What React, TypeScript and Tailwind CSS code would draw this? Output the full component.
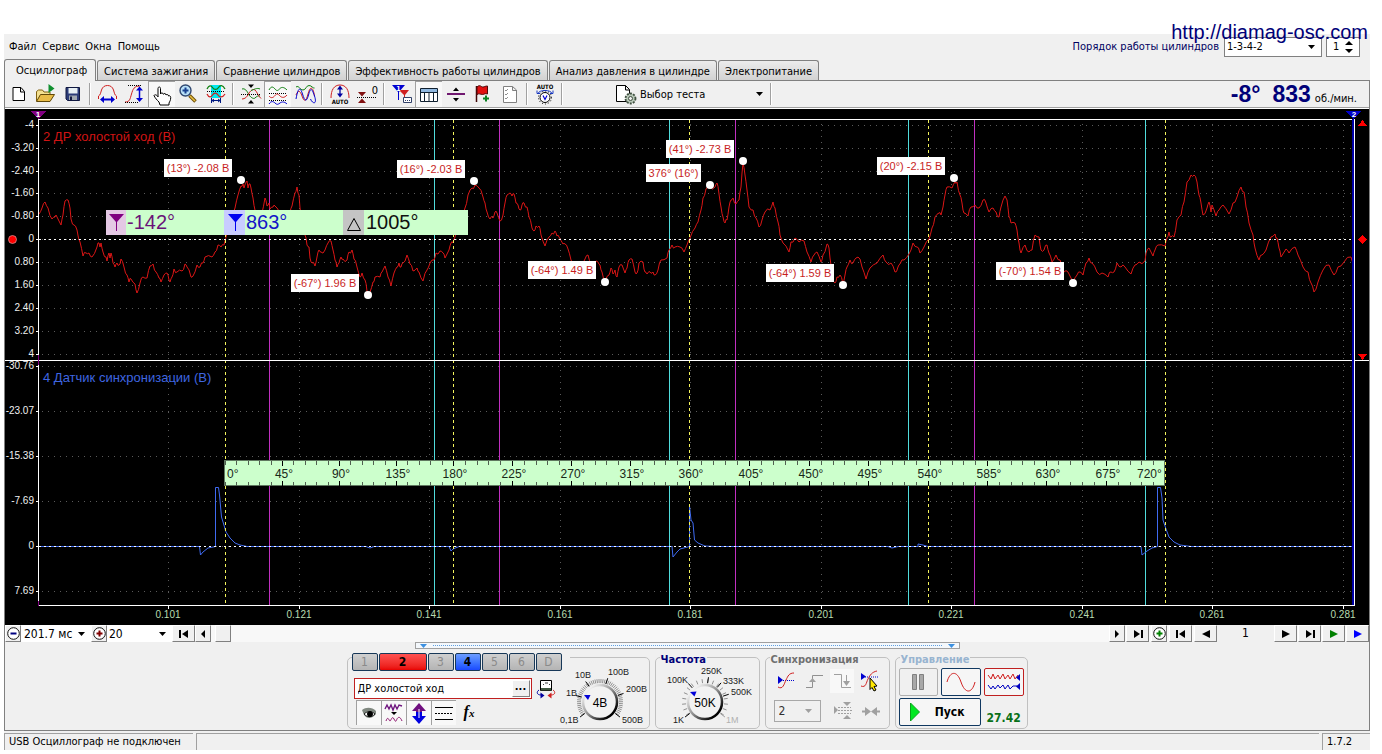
import React, { useState } from 'react';

const TABS = [
  'Осциллограф',
  'Система зажигания',
  'Сравнение цилиндров',
  'Эффективность работы цилиндров',
  'Анализ давления в цилиндре',
  'Электропитание',
];

const MENU = ['Файл', 'Сервис', 'Окна', 'Помощь'];

// channel 2: idle speed pressure sensor, [x, y] in chart units
const RED: number[] = [
  39,214, 42,208, 45,202, 48,208, 52,219, 55,217, 56,215, 61,225, 63,215, 65,201, 68,200, 70,208, 71,219, 74,225, 77,230,
  80,242, 83,256, 86,253, 89,253, 92,257, 97,247, 99,243, 100,247, 101,243, 103,252, 106,257, 107,261, 109,253, 110,258,
  111,253, 113,263, 115,267, 117,263, 119,265, 121,259, 124,267, 127,275, 129,282, 131,279, 135,284, 137,293, 140,283,
  143,277, 147,278, 150,266, 153,264, 156,272, 159,278, 161,282, 164,275, 167,273, 169,280, 170,282, 172,277, 174,269,
  177,272, 182,271, 185,264, 187,267, 191,277, 193,276, 197,265, 200,267, 203,263, 205,257, 212,257, 215,252, 218,245,
  221,247, 224,245, 226,237, 231,222, 235,208, 238,195, 241,186, 243,184, 244,188, 247,181, 248,188, 249,184, 251,188,
  253,198, 255,210, 258,222, 262,213, 265,198, 267,206, 269,203, 270,209, 273,207, 275,206, 277,208, 284,220, 290,212,
  292,206, 295,193, 297,187, 299,195, 300,208, 303,223, 305,235, 307,245, 309,247, 310,258, 312,263, 315,266, 317,257,
  319,250, 321,252, 325,250, 328,243, 331,241, 333,250, 335,260, 337,267, 339,263, 341,257, 343,259, 347,260, 349,252,
  352,250, 354,259, 357,267, 360,277, 362,273, 365,280, 367,291, 368,295, 370,292, 373,282, 375,277, 380,277, 382,272,
  385,266, 388,277, 391,286, 394,273, 397,267, 399,263, 401,267, 403,263, 407,255, 410,264, 413,271, 417,268, 419,272,
  423,281, 427,270, 430,263, 434,260, 436,253, 440,251, 443,253, 445,258, 449,250, 451,243, 453,243, 455,237, 460,222,
  465,208, 468,195, 472,188, 475,185, 479,188, 483,197, 485,203, 487,212, 490,219, 493,218, 495,212, 497,213, 500,221,
  503,215, 505,203, 507,195, 510,193, 512,196, 514,194, 516,203, 518,205, 520,210, 522,205, 524,203, 527,207, 529,217,
  532,228, 534,231, 536,226, 539,226, 541,235, 545,246, 549,237, 552,233, 555,231, 557,236, 559,237, 563,244, 565,244,
  568,249, 571,260, 574,267, 580,265, 585,259, 588,255, 591,262, 594,264, 598,262, 600,265, 602,272, 605,282, 609,275,
  611,268, 613,274, 615,270, 617,277, 619,267, 622,265, 625,273, 627,268, 629,260, 632,259, 635,272, 637,273, 639,263,
  643,262, 645,272, 647,274, 651,273, 653,272, 655,275, 658,270, 661,260, 667,258, 669,250, 672,245, 675,247, 680,247,
  684,252, 687,245, 690,238, 695,228, 698,222, 701,210, 703,198, 706,189, 710,187, 715,187, 717,183, 719,194, 721,207,
  723,217, 725,223, 727,220, 729,207, 731,200, 733,198, 736,204, 739,200, 741,187, 742,173, 743,163, 745,175, 747,190,
  749,207, 753,210, 756,218, 759,227, 762,220, 765,212, 770,210, 773,202, 775,208, 778,222, 780,235, 783,243, 789,252,
  791,242, 795,238, 799,242, 804,241, 807,252, 811,262, 814,255, 817,252, 821,262, 823,255, 827,244, 829,248, 830,258,
  831,265, 833,280, 835,283, 837,277, 840,275, 843,284, 845,275, 847,267, 850,260, 853,263, 856,258, 860,259, 862,267,
  866,279, 870,268, 877,263, 883,255, 886,262, 891,263, 895,272, 898,267, 900,264, 904,260, 909,254, 913,243, 917,247,
  920,253, 924,247, 929,239, 932,228, 935,217, 939,213, 941,215, 943,207, 945,195, 947,187, 952,188, 955,182, 957,182,
  960,195, 962,203, 964,213, 968,216, 971,207, 975,205, 979,208, 983,200, 986,203, 989,212, 993,208, 996,212, 999,217,
  1001,207, 1005,196, 1007,200, 1009,217, 1011,223, 1015,223, 1017,230, 1019,243, 1021,253, 1025,245, 1029,252,
  1032,250, 1035,235, 1039,237, 1041,250, 1044,250, 1047,245, 1049,253, 1052,262, 1056,255, 1060,260, 1064,272,
  1068,272, 1073,282, 1077,275, 1080,272, 1083,275, 1086,263, 1089,258, 1092,263, 1097,272, 1102,273, 1108,277,
  1111,272, 1114,272, 1117,263, 1121,267, 1125,267, 1131,274, 1135,265, 1139,262, 1145,261, 1146,253, 1149,248,
  1153,256, 1155,250, 1158,245, 1165,246, 1167,238, 1169,232, 1171,237, 1174,237, 1177,220, 1181,215, 1184,202,
  1187,182, 1191,175, 1194,175, 1197,182, 1199,195, 1201,203, 1203,215, 1207,208, 1209,202, 1211,212, 1212,205,
  1216,216, 1219,210, 1223,205, 1229,214, 1233,203, 1237,197, 1241,187, 1244,192, 1246,207, 1249,223, 1253,235,
  1255,248, 1259,260, 1262,255, 1266,250, 1271,237, 1275,234, 1277,238, 1279,248, 1281,257, 1286,249, 1289,253,
  1295,247, 1298,255, 1303,267, 1308,272, 1311,283, 1314,292, 1318,282, 1323,270, 1329,265, 1334,275, 1338,267,
  1344,262, 1351,257, 1353,263,
];

// channel 4: sync sensor
const BLUE =
  '39,546.5 199.5,546.5 200.5,555 203,552 208,548 215.5,546.5 215.5,487.5 218.5,487.5 219.5,495 221.5,517 223,522 226,532 230,538 235,543 240,545 247,546.5 366,546.5 370,548 374,546.5 449,546.5 451,551 453,549 459,546.5 672,546.5 673,557 677,552 680,549 689.5,546.5 689.5,506 691,520 693,523 694.5,540 698,543 705,546 715,546.5 888,546.5 892,548 898,546.5 918,546.5 918,544 923,545 928,546.5 1141,546.5 1142,555 1147,551 1152,548 1157.5,546.5 1157.5,487.5 1160.5,487.5 1162,498 1163,520 1166,529 1169,537 1174,542 1180,545 1191,546.5 1353,546.5';

// fills the gaps between the samples with a little sensor noise
function noisy(flat: number[]) {
  const out: string[] = [];
  let seed = 7;
  for (let i = 0; i < flat.length; i += 2) {
    const x = flat[i];
    const y = flat[i + 1];
    out.push(`${x},${y}`);
    if (i + 2 < flat.length) {
      seed = (seed * 73 + 41) % 211;
      const nx = flat[i + 2];
      const ny = flat[i + 3];
      if (nx - x > 1) out.push(`${(x + nx) / 2},${(y + ny) / 2 + ((seed % 7) - 3) * 0.7}`);
    }
  }
  return out.join(' ');
}

const RED_POINTS = noisy(RED);

const TOP_AXIS: [string, number][] = [
  ['-4', 125], ['-3.20', 148], ['-2.40', 171], ['-1.60', 193], ['-0.80', 216], ['0', 239],
  ['0.80', 262], ['1.60', 285], ['2.40', 308], ['3.20', 331], ['4', 354],
];
const BOTTOM_AXIS: [string, number][] = [
  ['-30.76', 366], ['-23.07', 411], ['-15.38', 456], ['-7.69', 501], ['0', 546], ['7.69', 591],
];
const TIME_AXIS: [string, number][] = [
  ['0.101', 168], ['0.121', 299], ['0.141', 429], ['0.161', 560], ['0.181', 690],
  ['0.201', 821], ['0.221', 951], ['0.241', 1082], ['0.261', 1212], ['0.281', 1343],
];
const RULER: [string, number][] = [
  ['45°', 282], ['90°', 339], ['135°', 396], ['180°', 453], ['225°', 512], ['270°', 571], ['315°', 630], ['360°', 689],
  ['405°', 749], ['450°', 809], ['495°', 868], ['540°', 928], ['585°', 987], ['630°', 1046], ['675°', 1106],
];
const YELLOW = [225, 453, 689, 928, 1165];
const MAGENTA = [269, 499, 735, 974];
const CYAN = [434, 669, 908, 1145];

const NOTES: { x: number; y: number; w: number; text: string; dot: [number, number] }[] = [
  { x: 164, y: 159, w: 68, text: '(13°) -2.08 В', dot: [241, 180] },
  { x: 397, y: 160, w: 68, text: '(16°) -2.03 В', dot: [474, 181] },
  { x: 291, y: 274, w: 68, text: '(-67°) 1.96 В', dot: [368, 295] },
  { x: 528, y: 261, w: 68, text: '(-64°) 1.49 В', dot: [605, 282] },
  { x: 646, y: 164, w: 55, text: '376° (16°)', dot: [710, 185] },
  { x: 666, y: 140, w: 68, text: '(41°) -2.73 В', dot: [743, 161] },
  { x: 766, y: 264, w: 68, text: '(-64°) 1.59 В', dot: [843, 285] },
  { x: 877, y: 157, w: 68, text: '(20°) -2.15 В', dot: [954, 178] },
  { x: 996, y: 262, w: 68, text: '(-70°) 1.54 В', dot: [1073, 283] },
];

function Chart() {
  const stops = [225, ...RULER.map((r) => r[1]), 1165];
  return (
    <svg
      viewBox="5 109 1364 516"
      className="block w-full h-auto bg-black font-['Liberation_Sans',Arial,sans-serif]"
      shapeRendering="crispEdges"
    >
      {/* grid */}
      <g stroke="#5a5a5a" strokeDasharray="1 5">
        {[...TOP_AXIS, ...BOTTOM_AXIS].map(([, y]) => (
          <line key={y} x1="42" x2="1353" y1={y + 0.5} y2={y + 0.5} />
        ))}
        {TIME_AXIS.map(([, x]) => (
          <line key={x} x1={x + 0.5} x2={x + 0.5} y1="124" y2="604" />
        ))}
      </g>

      {/* phase markers */}
      {CYAN.map((x) => (
        <rect key={x} x={x} y="120" width="1" height="485" fill="#50dcdc" />
      ))}
      {MAGENTA.map((x) => (
        <rect key={x} x={x} y="120" width="1" height="485" fill="#c030c0" />
      ))}

      {/* traces */}
      <polyline points={RED_POINTS} fill="none" stroke="#dc1616" shapeRendering="auto" />
      <polyline points={BLUE} fill="none" stroke="#3f6af0" shapeRendering="auto" />
      {YELLOW.map((x) => (
        <line key={x} x1={x + 0.5} x2={x + 0.5} y1="120" y2="605" stroke="#f4f45c" strokeDasharray="3 3" />
      ))}
      <g stroke="#fff" strokeDasharray="2 3">
        <line x1="39" x2="1353" y1="239.5" y2="239.5" />
        <line x1="39" x2="1353" y1="546.5" y2="546.5" />
      </g>

      {/* frame */}
      <g stroke="#fff">
        <line x1="38" x2="1355" y1="119.5" y2="119.5" />
        <line x1="5" x2="1369" y1="360.5" y2="360.5" />
        <line x1="38" x2="1355" y1="605.5" y2="605.5" />
        <line x1="38.5" x2="38.5" y1="119" y2="605" />
        <line x1="1354.5" x2="1354.5" y1="119" y2="605" />
        {[...TOP_AXIS, ...BOTTOM_AXIS].map(([, y]) => (
          <line key={y} x1="36" x2="39" y1={y + 0.5} y2={y + 0.5} />
        ))}
        {TIME_AXIS.map(([, x]) => (
          <line key={x} x1={x + 0.5} x2={x + 0.5} y1="605" y2="609" />
        ))}
      </g>
      <rect x="1352" y="119" width="2" height="486" fill="#0000a8" />
      <rect x="38" y="601" width="1" height="5" fill="#800080" />
      <rect x="38" y="355" width="1" height="10" fill="#800080" />

      {/* cursor flags */}
      <polygon points="31,111 46,111 39,119 38,119" fill="#800080" />
      <polygon points="1346,111 1361,111 1354,119 1353,119" fill="#0000c8" />
      <g fontSize="8" fontWeight="bold" fill="#fff" textAnchor="middle">
        <text x="38" y="117">1</text>
        <text x="1354" y="117">2</text>
      </g>
      <g fill="#f00">
        <polygon points="1362.5,120 1367,126 1358,126" />
        <polygon points="1362.5,235 1367,239.5 1362.5,244 1358,239.5" />
        <polygon points="1358,354 1367,354 1362.5,360" />
        <circle cx="12.5" cy="239.5" r="4" shapeRendering="auto" stroke="#e0a0a0" strokeWidth="0.7" />
      </g>

      {/* axis labels */}
      <g fontSize="10" fill="#f0f0f0" textAnchor="end">
        {[...TOP_AXIS, ...BOTTOM_AXIS].map(([t, y]) => (
          <text key={y} x="34" y={y + 3}>{t}</text>
        ))}
      </g>
      <g fontSize="10" fill="#b8dcb0" textAnchor="middle">
        {TIME_AXIS.map(([t, x]) => (
          <text key={x} x={x} y="618">{t}</text>
        ))}
      </g>
      <text x="43" y="141" fontSize="13" fill="#d01414">2 ДР холостой ход (В)</text>
      <text x="43" y="382" fontSize="13" fill="#3f66e0">4 Датчик синхронизации (В)</text>

      {/* peak notes */}
      {NOTES.map((n) => (
        <g key={n.text}>
          <rect x={n.x} y={n.y} width={n.w} height="18" fill="#fff" />
          <text x={n.x + n.w / 2} y={n.y + 13} fontSize="11" fill="#c81e1e" textAnchor="middle">{n.text}</text>
          <circle cx={n.dot[0]} cy={n.dot[1]} r="4" fill="#fff" shapeRendering="auto" />
        </g>
      ))}

      {/* cursor readout */}
      <rect x="106" y="210" width="362" height="25" fill="#ccffcc" />
      <rect x="106" y="210" width="20" height="25" fill="#e4c8e4" />
      <rect x="224" y="210" width="21" height="25" fill="#c8ccff" />
      <rect x="343" y="210" width="21" height="25" fill="#c4c4c4" />
      <g shapeRendering="auto">
        <path d="M109 214h15l-7 8v9h-1v-9z" fill="#800080" />
        <path d="M228 214h15l-7 8v9h-1v-9z" fill="#0000f0" />
        <path d="M354 218.500l6.500 12h-13z" fill="none" stroke="#000" />
      </g>
      <g fontSize="20">
        <text x="127" y="229" fill="#6a1478">-142°</text>
        <text x="246" y="229" fill="#1414c8">863°</text>
        <text x="366" y="229" fill="#101010">1005°</text>
      </g>

      {/* degree ruler */}
      <rect x="224.500" y="460.500" width="940" height="25" fill="#ccffcc" stroke="#607860" />
      {stops.slice(0, -1).map((a, i) =>
        [0, 1, 2, 3, 4].map((k) => {
          const x = Math.round(a + ((stops[i + 1] - a) * k) / 5) + 0.5;
          const major = k === 0 && i > 0;
          return (
            <path
              key={`${i}-${k}`}
              d={major ? `M${x} 461v5M${x} 481v5` : `M${x} 461v4M${x} 482v4`}
              stroke={major ? '#000' : '#506050'}
            />
          );
        }),
      )}
      <g fontSize="12" fill="#182818">
        <text x="227" y="478">0°</text>
        {RULER.map(([t, x]) => (
          <text key={t} x={x + 2} y="478" textAnchor="middle">{t}</text>
        ))}
        <text x="1137" y="478">720°</text>
      </g>
    </svg>
  );
}

/* ---------- toolbar ---------- */

const GREEN = '#108010';
const CRIMSON = '#d02020';
const NAVY = '#0000d0';

function Icon({ children }: { children: React.ReactNode }) {
  return (
    <svg viewBox="0 0 24 24" className="w-6 h-6 shrink-0" fill="none" stroke="#000">
      {children}
    </svg>
  );
}

type Tool = { name: string; pressed?: boolean; art: React.ReactNode } | null;

const TOOLS: Tool[] = [
  {
    name: 'Новый',
    art: <path d="M6 5.500h8l3.500 4v9H6zM13.500 5.500v4.500h4" fill="#fff" />,
  },
  {
    name: 'Открыть',
    art: (
      <>
        <path d="M2.500 19V9.500l2-1.500h4l1.500 2h6v3" fill="#f4e090" stroke="#806010" />
        <path d="M2.500 19.500l4-7h14l-4.500 7z" fill="#e8bc48" stroke="#604808" />
        <path d="M14.500 2v9l6-4.500z" fill="#109030" stroke="none" />
      </>
    ),
  },
  {
    name: 'Сохранить',
    art: (
      <>
        <path d="M5 5.500h13.500v13H6.500L5 17z" fill="#2c3c78" stroke="#101840" />
        <path d="M7.500 6h9v5.500h-9z" fill="#e8f0f4" stroke="none" />
        <path d="M8 13.500h8V18H8z" fill="#a0a8b0" stroke="none" />
        <path d="M9 14.500h2V18H9z" fill="#101840" stroke="none" />
      </>
    ),
  },
  null,
  {
    name: 'Ширина',
    art: (
      <>
        <path d="M2.500 17v-3c2-1 2-3 3-6s3-4.500 6-4.500 5 1.500 6 4.500 1 5 3 6v3" stroke={CRIMSON} />
        <path d="M6 17.500h11" stroke={NAVY} strokeWidth="2" />
        <path d="M4 17.500l4-3.500v7zM19 17.500l-4-3.500v7z" fill={NAVY} stroke="none" />
      </>
    ),
  },
  {
    name: 'Высота',
    art: (
      <>
        <path d="M2 20c5 0 5-3 6.500-8S11 4 17 4" stroke={CRIMSON} />
        <path d="M5 3.500h14M2 20.500h13" strokeDasharray="1 1" />
        <path d="M16.500 7v11" stroke={NAVY} strokeWidth="1.500" />
        <path d="M16.500 4.500l3.500 4h-7zM16.500 20l3.500-4h-7z" fill={NAVY} stroke="none" />
      </>
    ),
  },
  {
    name: 'Рука',
    pressed: true,
    art: (
      <path
        d="M10 22l-1-3c-2-2-4-4-5-6.500 1-1.500 3-.5 4 1.500V5.500c0-2 2.500-2 2.500 0V11c.5-1.500 2.500-1.500 2.800.3.700-1.300 2.700-1 2.700.7.800-1 2.500-.5 2.500 1 1-.7 2.200 0 2.200 1.500 0 3-1 4-1.700 5.500v2z"
        fill="#fff"
      />
    ),
  },
  {
    name: 'Лупа',
    art: (
      <>
        <path d="M12.500 13.500l6 6" stroke="#705008" strokeWidth="3.500" />
        <path d="M13 14l5 5" stroke="#e8c040" strokeWidth="1.500" />
        <circle cx="8.500" cy="8.500" r="5.500" fill="#b8e0f8" stroke="#304870" strokeWidth="1.400" />
        <path d="M8.500 5.500v6M5.500 8.500h6" stroke="#184090" strokeWidth="2" />
      </>
    ),
  },
  {
    name: 'Область',
    art: (
      <>
        <path d="M7 3h10v13H7z" fill="#00e8f0" stroke="none" />
        <path d="M3 7c2-4 4-4 5.500-1.500S13 8 14.500 5.500 18.500 2.500 21 7" stroke={GREEN} strokeWidth="1.300" />
        <path d="M3 9.500h18" strokeDasharray="1 1" />
        <path d="M3 12c2 4 4 3.500 5.500 1s4-2.500 5.500 0 4.500 3 7-1" stroke={CRIMSON} strokeWidth="1.300" />
        <path d="M7.500 16v5M16.500 16v5M8 18.500h8M10 17l-2 1.500 2 1.500M14 17l2 1.500-2 1.500" stroke="#001880" />
      </>
    ),
  },
  null,
  {
    name: 'Совместить',
    art: (
      <>
        <path d="M9 2.500h6l-3 3.500zM9 21.500h6l-3-3.500z" fill="#000" stroke="none" />
        <path d="M3 7c3-1 5 2 6.500 5s5 5.500 6.500 4 3-2.500 5-2" stroke={GREEN} />
        <path d="M3 17c3 0 5-2 6.500-5S14 6.500 16 8s3 6 6 8.500" stroke={CRIMSON} />
        <path d="M12 8.500c3-1 6-3 9-1.500" stroke={GREEN} />
        <path d="M2 12.500h20" strokeDasharray="1 1" />
      </>
    ),
  },
  {
    name: 'Раздельно',
    pressed: true,
    art: (
      <>
        <path d="M3 7c2-4 4-3.500 6-1s3 1.500 5-.5 4.500-1 7 1.500" stroke={GREEN} />
        <path d="M3 10.500h18M3 17.500h18" strokeDasharray="1 1" />
        <path d="M3 13c2 2.500 4 2 6-.5s3-1.500 5 .5 4.500 2 7-1" stroke={CRIMSON} />
        <path d="M3 21c2-3 4-3 6-1s3 1.500 5 0 4.500-1.500 7 1" stroke={NAVY} />
      </>
    ),
  },
  {
    name: 'Вместе',
    art: (
      <>
        <path d="M3 5c3-2 4 3 7 3s3-4.500 6-4.500 3.500 3 5.500 2.500" stroke={GREEN} />
        <path d="M3 13c2-5 4-5 6 1s4 6 6-2 5-8 6.500 2" stroke={CRIMSON} />
        <path d="M3 17C5 6 7 4 9.500 12s4 8 6 1 3-8 6 1-2 8-4 3" stroke={NAVY} />
      </>
    ),
  },
  null,
  {
    name: 'Авто',
    art: (
      <>
        <path d="M3 16c0-8 3-13 9-13s9 5 9 13" stroke={CRIMSON} />
        <path d="M12 5v9" stroke="#0000a0" strokeWidth="1.300" />
        <path d="M12 3.500l3 4H9zM12 15.500l3-4H9z" fill="#0000a0" stroke="none" />
        <text x="12" y="22" fontSize="6" fontWeight="bold" textAnchor="middle" fill="#000" stroke="none">AUTO</text>
      </>
    ),
  },
  {
    name: 'Ноль',
    art: (
      <>
        <text x="20" y="12" fontSize="11" textAnchor="middle" fill="#000" stroke="none">0</text>
        <path d="M3 10h8l-4 4.500zM3 21h8l-4-4.500z" fill="#801010" stroke="none" />
        <path d="M2 15.500h20" strokeDasharray="1 1" />
      </>
    ),
  },
  null,
  {
    name: 'Курсоры',
    art: (
      <>
        <path d="M2 3h13l-6 7v8H8v-8z" fill={NAVY} stroke="none" />
        <path d="M9 8h10l-4 5v6h-1v-6z" fill={CRIMSON} stroke="none" />
        <text x="8.500" y="9" fontSize="7" fontWeight="bold" textAnchor="middle" fill="#fff" stroke="none">1</text>
        <path d="M13.500 15.500h8v5h-8z" fill="#fff" stroke="#304068" />
        <path d="M15 18.500h5" stroke="#304068" strokeDasharray="1 1" />
      </>
    ),
  },
  {
    name: 'Таблица',
    pressed: true,
    art: (
      <>
        <path d="M3.500 5.500h17v13h-17z" fill="#fff" stroke="#102030" />
        <path d="M4 6h16v3H4z" fill="#90b8e0" stroke="none" />
        <path d="M3.500 9.500h17M7.500 9v9.500M12 9v9.500M16.500 9v9.500" stroke="#102030" />
      </>
    ),
  },
  {
    name: 'Уровень',
    art: (
      <>
        <path d="M3 12h18" stroke="#701870" strokeWidth="2" />
        <path d="M9 9h6l-3-3.500zM9 16h6l-3 3.500z" fill="#000" stroke="none" />
      </>
    ),
  },
  {
    name: 'Метка',
    art: (
      <>
        <path d="M5.500 4v16" stroke="#400808" strokeWidth="1.500" />
        <path d="M6 5c3-3 4 0 6 0 1.500 0 2-1 4.500-1v8c-3-1-3 .5-5 .5S8 11 6 12.500z" fill="#e01010" stroke="#500808" />
        <path d="M15 13.500v6M12 16.500h6" stroke="#088020" strokeWidth="2" />
      </>
    ),
  },
  {
    name: 'Отчёт',
    art: (
      <>
        <path d="M5.500 4.500h9l4 3.500v12.500h-13zM14.500 4.500V8.500h4" fill="#fff" stroke="#808080" />
        <path d="M7 8l1 1 2-2M7 12l1 1 2-2M7 16l1 1 2-2" stroke="#909090" />
      </>
    ),
  },
  null,
  {
    name: 'Автонастройка',
    art: (
      <>
        <text x="12" y="7" fontSize="6" fontWeight="bold" textAnchor="middle" fill="#000" stroke="none">AUTO</text>
        <circle cx="12" cy="15.500" r="5" fill="#fff" />
        <circle cx="12" cy="15.500" r="6.500" strokeDasharray="1 2" />
        <path d="M10 13.500l2 4 2-4" stroke={NAVY} strokeWidth="1.200" />
        <path d="M5 11.500c1-4 13-4 14 0M4 8.500v3h3M20 8.500v3h-3" stroke="#1838c0" />
      </>
    ),
  },
  null,
];

function Sep() {
  return (
    <div className="w-2 flex justify-center py-0.5">
      <div className="w-0.5 h-full bg-[#a0a0a0] border-r border-white" />
    </div>
  );
}

function Toolbar() {
  return (
    <div className="flex h-[27px] border-b border-[#a0a0a0]">
      {TOOLS.map((t, i) =>
        t ? (
          <button
            key={i}
            aria-label={t.name}
            className={
              t.pressed
                ? 'w-[27px] flex items-center justify-center bg-[#f8f8f8] border-l border-t border-[#a0a0a0]'
                : 'w-[27px] flex items-center justify-center'
            }
          >
            <Icon>{t.art}</Icon>
          </button>
        ) : (
          <Sep key={i} />
        ),
      )}
      <button className="w-[201px] flex items-center pl-12 pr-1">
        <Icon>
          <path d="M2.500 3.500h9l4 4v12h-13zM11.500 3.500V8h4" fill="#fff" />
          <circle cx="16.500" cy="16.500" r="5" fill="#b8c8b8" stroke="#405040" strokeWidth="1.800" strokeDasharray="2 1.200" />
          <circle cx="16.500" cy="16.500" r="2" fill="#f0f0f0" stroke="#405040" />
        </Icon>
        <span className="grow text-left pl-0.5">Выбор теста</span>
        <Caret />
      </button>
      <Sep />
      <div className="ml-auto flex items-baseline pr-3 font-['Liberation_Sans',Arial,sans-serif] text-[23px] leading-[26px] font-bold text-[#000078]">
        <span className="mr-3">-8°</span>
        <span>833</span>
        <span className="ml-1 text-[11px] font-normal text-black font-['DejaVu_Sans_Condensed','DejaVu_Sans',sans-serif]">об./мин.</span>
      </div>
    </div>
  );
}

function Caret({ className = 'fill-black' }: { className?: string }) {
  return (
    <svg viewBox="0 0 7 4" className={`w-[7px] h-1 shrink-0 ${className}`}>
      <path d="M0 0h7L3.500 4z" />
    </svg>
  );
}

/* ---------- navigation strip ---------- */

const RAISED = 'h-[17px] flex items-center justify-center bg-[#f0f0f0] border border-t-white border-l-white border-b-[#808080] border-r-[#808080]';

function NavButton({ name, wide = true, d, fill = '#000' }: { name: string; wide?: boolean; d: string; fill?: string }) {
  return (
    <button aria-label={name} className={`${RAISED} ${wide ? 'w-[23px]' : 'w-4'}`}>
      <svg viewBox="0 0 12 10" className="w-3 h-2.5 shrink-0">
        <path d={d} fill={fill} />
      </svg>
    </button>
  );
}

function ZoomButton({ name, color, plus }: { name: string; color: string; plus?: boolean }) {
  return (
    <button aria-label={name} className={`${RAISED} w-4`}>
      <svg viewBox="0 0 13 13" className="w-[13px] h-[13px] shrink-0" fill="none">
        <circle cx="6.500" cy="6.500" r="5.800" fill="#fff" stroke="#101010" />
        <path d={plus ? 'M3.500 6.500h6M6.500 3.500v6' : 'M3.500 6.500h6'} stroke={color} strokeWidth="2" />
      </svg>
    </button>
  );
}

const FIRST = 'M1 1h2v8H1zM10 1v8L4 5z';
const LAST = 'M9 1h2v8H9zM2 1v8l6-4z';
const PREV = 'M10 1v8L2 5z';
const NEXT = 'M2 1v8l8-4z';

function NavStrip() {
  return (
    <div className="flex h-[17px] bg-[#f8f8f8]">
      <ZoomButton name="Меньше" color="#000080" />
      <label className="relative flex items-center bg-white w-[70px] border-l border-white">
        <select aria-label="Развёртка" className="appearance-none w-full pl-0.5 bg-transparent outline-none text-[12px] leading-4">
          <option>201.7 мс</option>
        </select>
        <Caret className="absolute right-1.5 pointer-events-none" />
      </label>
      <ZoomButton name="Больше" color="#800000" plus />
      <label className="relative flex items-center bg-white w-[65px]">
        <select aria-label="Масштаб" className="appearance-none w-full pl-0.5 bg-transparent outline-none text-[12px] leading-4">
          <option>20</option>
        </select>
        <Caret className="absolute right-1.5 pointer-events-none" />
      </label>
      <NavButton name="В начало" d={FIRST} />
      <NavButton name="Назад" wide={false} d="M8 1v8L4 5z" />
      <button aria-label="Прокрутка" className={`${RAISED} w-4 ml-1`} />
      <div className="grow" />
      <NavButton name="Вперёд" wide={false} d="M4 1v8l4-4z" />
      <div className="flex gap-0.5 ml-px">
        <NavButton name="В конец" d={LAST} />
        <ZoomButton name="Добавить кадр" color="#008000" plus />
        <NavButton name="Первый кадр" d={FIRST} />
        <NavButton name="Предыдущий кадр" d={PREV} />
      </div>
      <span className="w-[57px] text-center bg-[#f0f0f0] text-[12px] leading-[17px]">1</span>
      <div className="flex gap-px">
        <NavButton name="Следующий кадр" d={NEXT} />
        <NavButton name="Последний кадр" d={LAST} />
        <NavButton name="Воспроизвести" d={NEXT} fill="#008000" />
        <NavButton name="Воспроизвести всё" d={NEXT} fill="#0000ff" />
      </div>
    </div>
  );
}

/* ---------- bottom panels ---------- */

const CHANNELS = ['1', '2', '3', '4', '5', '6', 'D'];

function channelClass(c: string) {
  if (c === '2') return 'w-12 font-bold text-black bg-linear-to-b from-[#ff5050] to-[#e80000]';
  if (c === '4') return 'w-[26px] font-bold text-black bg-linear-to-b from-[#6c9cff] to-[#1c48ff]';
  return 'w-[26px] text-[#8a8a8a] bg-linear-to-b from-[#d0d0d0] to-[#b4b4b4]';
}

const KNOB_FONT = "font-['Liberation_Sans',Arial,sans-serif]";

type Mark = { text: string; x: number; y: number; angle: number; dim?: boolean };

function Dial({ name, value, cx, box, marks, ticks, pointer }: {
  name: string; value: string; cx: number; box: string; marks: Mark[]; ticks: number; pointer: string;
}) {
  const tick = (deg: number, r1: number, r2: number) => {
    const a = (deg * Math.PI) / 180;
    return `M${cx + r1 * Math.sin(a)} ${702 - r1 * Math.cos(a)}L${cx + r2 * Math.sin(a)} ${702 - r2 * Math.cos(a)}`;
  };
  const gradId = `rim${cx}`;
  return (
    <div className="relative">
      <svg viewBox={box} className={`block w-full h-[66px] ${KNOB_FONT}`} fontSize="9">
        <defs>
          <linearGradient id={gradId} x1="0" y1="0" x2="1" y2="1">
            <stop offset="0.15" stopColor="#f0f0f0" />
            <stop offset="0.5" stopColor="#909090" />
            <stop offset="0.85" stopColor="#000" />
          </linearGradient>
        </defs>
        {Array.from({ length: ticks }, (_, i) => (
          <path key={i} d={tick(-125 + (250 * i) / (ticks - 1), 19, 23)} stroke="#909090" />
        ))}
        {marks.map((m) => (
          <g key={m.text}>
            <path d={tick(m.angle, 19, 25)} stroke={m.dim ? '#a0a0a0' : '#000'} />
            <text x={m.x} y={m.y + 3} fill={m.dim ? '#b0b0b0' : '#202020'}>{m.text}</text>
          </g>
        ))}
        <circle cx={cx} cy="702" r="17" fill="#f2f2f2" stroke={`url(#${gradId})`} strokeWidth="2.500" />
        <path d={pointer} fill="#0000d8" />
        <text x={cx} y="707" fontSize="12" textAnchor="middle" fill="#000">{value}</text>
      </svg>
      <input type="range" aria-label={name} className="absolute inset-0 w-full h-full opacity-0" />
    </div>
  );
}

function Group({ title, tone, className, children }: {
  title: string; tone: string; className: string; children: React.ReactNode;
}) {
  return (
    <fieldset className={`h-[76px] border border-[#c0c0c0] rounded-[5px] ${className}`}>
      <legend className={`ml-1 h-2 leading-[13px] px-px text-[11px] font-bold ${tone}`}>{title}</legend>
      {children}
    </fieldset>
  );
}

const TOGGLE = 'w-[25px] h-[25px] flex items-center justify-center bg-[#f8f8f8] border-l border-t border-[#a0a0a0]';

function ChannelPanel() {
  const [name, setName] = useState('ДР холостой ход');
  return (
    <fieldset className="h-[76px] w-[303px] border border-[#c0c0c0] rounded-[5px]">
      <legend className="ml-1 pr-2 h-2">
        <div className="flex gap-px">
          {CHANNELS.map((c) => (
            <button key={c} className={`h-[18px] border border-[#183858] rounded-[2px] text-[12px] leading-4 ${channelClass(c)}`}>
              {c}
            </button>
          ))}
        </div>
      </legend>
      <div className="flex justify-between">
        <div className="pl-1.5 pt-[17px]">
          <div className="flex items-center gap-1">
            <div className="flex w-[178px] h-[21px] border border-[#c02020] bg-white p-px">
              <input
                aria-label="Название канала"
                value={name}
                onChange={(e) => setName(e.target.value)}
                className="grow min-w-0 pl-0.5 outline-none bg-transparent"
              />
              <button className={`${RAISED} w-[18px] font-bold leading-3 pb-1`}>...</button>
            </div>
            <svg viewBox="0 0 20 20" className="w-5 h-5" fill="none">
              <path d="M4.500 1.500h11v10h-11z" fill="#fff" stroke="#000" />
              <path d="M5 9h10v2.500H5z" fill="#405840" />
              <path d="M7 6l1-1M9 4h3M13 5l1 1" stroke="#404040" />
              <path d="M3 11c-3 2-2 5 2 5" stroke="#0000a0" />
              <path d="M4.500 13.500l4 3-4 3z" fill="#0000a0" />
              <path d="M17 11c3 2 2 5-2 5" stroke={CRIMSON} />
              <path d="M15.500 13.500l-4 3 4 3z" fill={CRIMSON} />
            </svg>
          </div>
          <div className="flex pl-0.5 pt-px">
            <button aria-label="Видимость" className={TOGGLE}>
              <Icon>
                <path d="M5 9c4-3 10-3 14 1v3c-4 5-9 5-12 1" fill="#808880" stroke="none" />
                <path d="M7 13c3-3 8-3 11 0-3 3.500-8 3.500-11 0z" fill="#fff" stroke="#202020" />
                <circle cx="13" cy="13" r="2.500" fill="#000" />
              </Icon>
            </button>
            <button aria-label="Фильтр" className={TOGGLE}>
              <Icon>
                <path d="M3 8l2-4 2 4 2-4 2 5 2-5 2 4 2-4 3 1" stroke="#701880" strokeWidth="1.400" />
                <path d="M9 11h6l-3 3z" fill="#000" stroke="none" />
                <path d="M4 20c2-6 3 0 4 0s2-6 4-2 2 2 3 0 3-3 5 2" stroke="#901870" />
              </Icon>
            </button>
            <button aria-label="Инверсия" className={TOGGLE}>
              <Icon>
                <path d="M12 2l7 8h-4v4H9v-4H5z" fill="#701080" stroke="none" />
                <path d="M12 23l7-8h-4v-4H9v4H5z" fill="#0000e0" stroke="none" />
                <path d="M12 8v9" stroke="#fff" />
              </Icon>
            </button>
            <button aria-label="Линии" className={TOGGLE}>
              <Icon>
                <path d="M3 6.500h18M3 18.500h18" />
                <path d="M3 12.500h18" strokeDasharray="2 1" />
              </Icon>
            </button>
            <button className="w-[27px] font-['Liberation_Serif',serif] text-[16px] leading-5 font-bold italic">
              f<span className="text-[11px]">x</span>
            </button>
          </div>
        </div>
        <div className="w-[93px]">
          <Dial
            name="Диапазон"
            value="4В"
            cx={600}
            box="556 661 93 66"
            ticks={50}
            pointer="M584 695h6.500l-2.500 5z"
            marks={[
              { text: '0,1В', x: 560, y: 720, angle: -127 },
              { text: '1В', x: 566, y: 693, angle: -75 },
              { text: '10В', x: 575, y: 675, angle: -35 },
              { text: '100В', x: 608, y: 672, angle: 18 },
              { text: '200В', x: 626, y: 689, angle: 70 },
              { text: '500В', x: 622, y: 720, angle: 127 },
            ]}
          />
        </div>
      </div>
    </fieldset>
  );
}

function FrequencyPanel() {
  return (
    <Group title="Частота" tone="text-[#000078]" className="w-[105px]">
      <Dial
        name="Частота"
        value="50K"
        cx={704}
        box="655 661 103 66"
        ticks={18}
        pointer="M689 692l6.500-.5-2 5z"
        marks={[
          { text: '1K', x: 672, y: 720, angle: -127 },
          { text: '100K', x: 666, y: 680, angle: -42 },
          { text: '250K', x: 700, y: 671, angle: 8 },
          { text: '333K', x: 722, y: 681, angle: 40 },
          { text: '500K', x: 730, y: 692, angle: 72 },
          { text: '1M', x: 725, y: 720, angle: 127, dim: true },
        ]}
      />
    </Group>
  );
}

function SyncPanel() {
  return (
    <Group title="Синхронизация" tone="text-[#707070]" className="w-[125px]">
      <div className="flex gap-1 pl-2 pt-2">
        <button aria-label="Уровень синхронизации">
          <Icon>
            <path d="M4 7v8l5-4z" fill={NAVY} stroke="none" />
            <path d="M7 11.500h14" stroke={NAVY} strokeDasharray="1 1" />
            <path d="M4 18c5 3 6-3 8-7s3-7 8-7" stroke={CRIMSON} />
          </Icon>
        </button>
        <button aria-label="По фронту">
          <Icon>
            <path d="M4 18.500h6.500v-12H21" stroke="#909090" />
            <path d="M10.500 9l3.500 4H7z" fill="#a0a0a0" stroke="none" />
          </Icon>
        </button>
        <button aria-label="По спаду" className="bg-[#f8f8f8]">
          <Icon>
            <path d="M4 5.500h7.500v13H21M16.500 6v8" stroke="#a0a0a0" />
            <path d="M16.500 17l3.500-5h-7z" fill="#a0a0a0" stroke="none" />
          </Icon>
        </button>
        <button aria-label="Выбор точки">
          <Icon>
            <path d="M3 4v7l5-3.500z" fill={NAVY} stroke="none" />
            <path d="M5 8h16" stroke={NAVY} strokeDasharray="1 1" />
            <path d="M3 17c5 2 5-3 7-7s4-7 9-8" stroke={CRIMSON} />
            <path d="M12 9l7 8-3 .5 2 3.500-2 1-2-3.500-2 2z" fill="#ffe800" />
          </Icon>
        </button>
      </div>
      <div className="flex items-center pl-2 pt-1.5">
        <label className="relative flex items-center w-[47px] h-[22px] border border-[#a8a8a8] mr-2.5">
          <select aria-label="Канал синхронизации" className="appearance-none w-full pl-1 bg-transparent outline-none text-[12px] leading-4 text-[#303030]">
            <option>2</option>
          </select>
          <Caret className="absolute right-2 fill-[#a0a0a0] pointer-events-none" />
        </label>
        <button aria-label="Окно уровня">
          <Icon>
            <path d="M3 7v8l4-4z" fill="#a0a0a0" stroke="none" />
            <path d="M7 8.500h13M7 14.500h13M7 11.500h14" stroke="#a0a0a0" strokeDasharray="2 1" />
            <path d="M12 3h8l-4 4zM12 20h8l-4-4z" fill="#a0a0a0" stroke="none" />
          </Icon>
        </button>
        <button aria-label="К центру" className="ml-1">
          <Icon>
            <path d="M3 12.500h5M16 12.500h5" stroke="#a0a0a0" strokeWidth="2" />
            <path d="M6 8v9l6-4.500zM18 8v9l-6-4.500z" fill="#a0a0a0" stroke="none" />
          </Icon>
        </button>
      </div>
    </Group>
  );
}

function ControlPanel() {
  return (
    <Group title="Управление" tone="text-[#98b4d0]" className="w-[133px]">
      <div className="grid grid-cols-3 gap-x-[3px] gap-y-0.5 px-[3px] pt-[7px]">
        <button aria-label="Пауза" className="h-7 flex items-center justify-center border border-[#b0b0b0] rounded-[2px]">
          <svg viewBox="0 0 12 16" className="w-3 h-4" fill="#a8a8a8" stroke="#808080">
            <path d="M.5.5h4v15h-4zM7.500.5h4v15h-4z" />
          </svg>
        </button>
        <button aria-label="Синус" className="h-7 flex items-center justify-center border border-[#103860] rounded-[2px] bg-[#f6f6f6]">
          <svg viewBox="0 0 30 20" className="w-[30px] h-5" fill="none" stroke={CRIMSON}>
            <path d="M1 10C4-1 11-2 15 10s11 12 14 0" />
          </svg>
        </button>
        <button aria-label="Сигналы" className="h-7 flex items-center justify-center border border-[#c02020] rounded-[2px] bg-[#f6f6f6]">
          <svg viewBox="0 0 34 22" className="w-[34px] h-[22px] shrink-0" fill="none">
            <path d="M1 4l3 4 2-5 2 5 3-4 2 4 3-5 2 5 3-4 2 4 3-5 2 5 3-4" stroke={CRIMSON} />
            <path d="M33 3v7l-4-3.500z" fill="#0000c0" />
            <path d="M1 14l3 4 2-3 2 3 3-4 2 3 3-3 2 4 3-4 2 4 3-3h4" stroke="#0000c0" />
            <path d="M33 12v7l-4-3.500z" fill="#0000c0" />
          </svg>
        </button>
        <button className="col-span-2 h-7 flex items-center border border-[#103860] rounded-[2px] bg-[#f6f6f6] font-bold text-[12px]">
          <svg viewBox="0 0 10 20" className="w-2.5 h-5 ml-2.5" fill="#00e820" stroke="#08a018">
            <path d="M.5 1v18l9-9z" />
          </svg>
          <span className="grow text-center">Пуск</span>
        </button>
        <output className="self-center pt-3 text-center text-[12px] font-bold text-[#087018]">27.42</output>
      </div>
    </Group>
  );
}

export default function App() {
  const [tab, setTab] = useState(0);
  return (
    <div className="relative bg-white pt-[34px] pl-1 pr-3 text-[11px] leading-[13px] text-black font-['DejaVu_Sans_Condensed','DejaVu_Sans',sans-serif]">
      <div className="bg-[#f0f0f0]">
        <header className="flex h-[25px] items-center justify-between pr-2.5">
          <nav className="flex gap-1.5 pl-[5px]">
            {MENU.map((m) => (
              <button key={m}>{m}</button>
            ))}
          </nav>
          <div className="flex items-center">
            <label htmlFor="order" className="text-[#000060] mr-[5px]">Порядок работы цилиндров</label>
            <div className="relative flex items-center w-[98px] h-5 bg-white border border-[#808080] mr-1">
              <select id="order" className="appearance-none w-full pl-0.5 bg-transparent outline-none">
                <option>1-3-4-2</option>
              </select>
              <Caret className="absolute right-1.5 pointer-events-none" />
            </div>
            <div className="flex items-center w-[34px] h-5 bg-white border border-[#808080] pr-1.5">
              <input aria-label="Цилиндр" defaultValue="1" className="grow min-w-0 pl-1.5 outline-none bg-transparent" />
              <svg viewBox="0 0 8 14" className="w-2 h-3.5 shrink-0">
                <path d="M0 5h8L4 1zM0 9h8l-4 4z" />
              </svg>
            </div>
          </div>
        </header>
        <a href="#" className="absolute top-5 right-[14px] z-10 font-['Liberation_Sans',Arial,sans-serif] text-[20px] leading-6 text-[#000078]">
          http://diamag-osc.com
        </a>

        <div role="tablist" className="flex items-end h-[21px] gap-px">
          {TABS.map((t, i) => (
            <button
              key={t}
              role="tab"
              aria-selected={tab === i}
              onClick={() => setTab(i)}
              className={
                tab === i
                  ? 'relative h-[22px] -mb-px pl-[11px] pr-2 border border-b-0 border-[#808080] rounded-t-[3px] bg-[#f0f0f0]'
                  : 'h-5 px-1.5 pt-px border border-b-0 border-[#808080] rounded-t-[3px] bg-linear-to-b from-[#ececec] to-[#d2d2d2]'
              }
            >
              {t}
            </button>
          ))}
        </div>

        <main className="border border-[#808080] pb-px">
          <Toolbar />
          <div className="border-t border-white">
            <Chart />
          </div>
          <NavStrip />
          <div className="mx-auto w-[545px] h-[7px] flex items-center gap-1.5 px-1 bg-[#f4f8fc] border border-[#a0a0a0]">
            <Caret className="fill-[#3c90e0]" />
            <div className="grow border-t border-dotted border-[#60a0e0]" />
            <Caret className="fill-[#3c90e0]" />
          </div>
          <div className="flex justify-center gap-[5px] pt-1">
            <ChannelPanel />
            <FrequencyPanel />
            <SyncPanel />
            <ControlPanel />
          </div>
        </main>

        <footer className="flex gap-[3px] pt-0.5 h-[19px] leading-4">
          <div className="w-[189px] pl-1 border-l border-t border-[#a0a0a0]">USB Осциллограф не подключен</div>
          <div className="grow border-l border-t border-[#a0a0a0]" />
          <div className="w-12 pl-1 border-l border-t border-[#a0a0a0]">1.7.2</div>
        </footer>
      </div>
    </div>
  );
}
